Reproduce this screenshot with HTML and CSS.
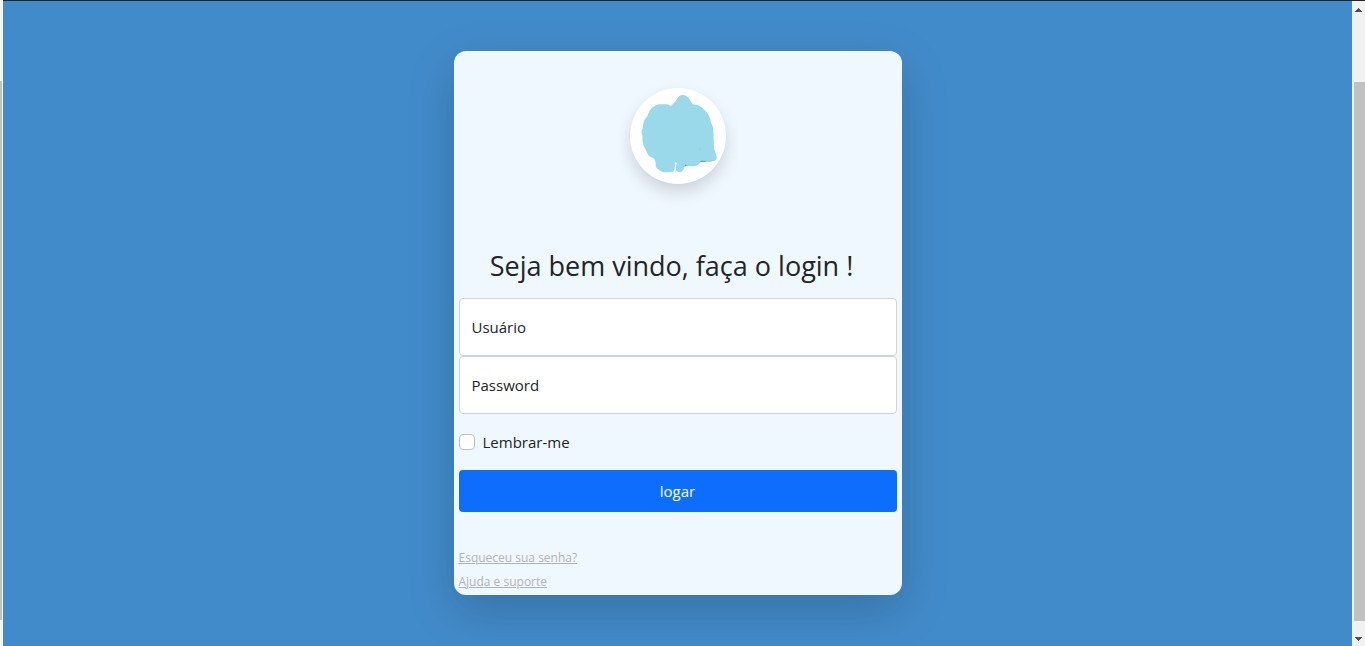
FILE: index.html
```html
<!DOCTYPE html>
<html lang="pt-BR">
<head>
<meta charset="utf-8">
<meta name="viewport" content="width=device-width, initial-scale=1">
<title>Login</title>
<link rel="stylesheet" href="styles.css">
</head>
<body>
<div class="window">
  <div class="edge"><div class="edge-thumb"></div></div>
  <main class="page">
    <form class="card">
      <div class="logo">
        <svg viewBox="60 54 288 288" aria-hidden="true">
          <path fill="#9ad9ea" d="M183 108 L198 92 Q206 74 218 74 Q229 75 236 84 L248 103 Q270 104 281 118 Q299 133 303 158 Q310 168 310 184 L312 236 Q320 254 320 264 Q318 274 306 274 L272 275 Q265 288 250 289 L229 288 Q222 289 221 298 Q216 307 209 307 Q198 305 197 295 L200 280 L196 276 Q194 280 196 284 L192 303 Q188 307 178 307 L160 307 Q150 304 145 298 Q137 295 137 285 Q138 268 128 263 Q116 262 112 249 L101 227 Q97 219 97 196 Q92 184 98 176 Q99 151 112 139 Q119 118 128 112 Q140 103 148 103 L168 103 Q178 104 183 108 Z"/>
          <path fill="none" stroke="#49656e" stroke-width="2" d="M271 274 h16 M225 286 h4"/>
          <path fill="none" stroke="#85bdca" stroke-width="2" d="M287 274 h18 M268 236 l4 3"/>
        </svg>
      </div>
      <h1 class="title">Seja bem vindo, faça o login !</h1>
      <div class="field">
        <input class="input" id="user" type="text" placeholder=" ">
        <label class="label" for="user">Usuário</label>
      </div>
      <div class="field">
        <input class="input" id="password" type="password" placeholder=" ">
        <label class="label" for="password">Password</label>
      </div>
      <div class="remember">
        <input class="check" id="remember" type="checkbox">
        <label for="remember">Lembrar-me</label>
      </div>
      <button class="submit" type="submit">logar</button>
      <nav class="links">
        <a href="#">Esqueceu sua senha?</a>
        <a href="#">Ajuda e suporte</a>
      </nav>
    </form>
  </main>
  <div class="scrollbar">
    <svg class="arrow" viewBox="0 0 7 4" aria-hidden="true"><path fill="#505050" d="M3 0h1v1h1v1h1v1h1v1H0V3h1V2h1V1h1z"/></svg>
    <div class="thumb"></div>
    <svg class="arrow" viewBox="0 0 7 4" aria-hidden="true"><path fill="#505050" d="M0 0h7v1H6v1H5v1H4v1H3V3H2V2H1V1H0z"/></svg>
  </div>
</div>
</body>
</html>
```
FILE: styles.css
```css
* { box-sizing: border-box; }

body {
  margin: 0;
  background: #428bca;
  color: #212529;
  font: 400 15px/24px "Open Sans", "Noto Sans", sans-serif;
}

.window {
  display: flex;
  height: 100vh;
  overflow: hidden;
}

.edge {
  flex: 0 0 3px;
  padding: 81px 1px 26px 0;
  background: #f5f5f5;
}

.edge-thumb {
  height: 100%;
  background: #c1c1c1;
}

.page {
  flex: 1;
  padding: 50px 16px;
  border-top: 1px solid #212529;
  overflow: hidden;
}

.card {
  width: 100%;
  max-width: 448px;
  margin: 0 auto;
  padding: 37px 5px 1px;
  border-radius: 12px;
  background: #f0f8ff;
  box-shadow: 0 16px 48px rgba(0, 0, 0, 0.18);
}

.logo {
  width: 96px;
  height: 96px;
  margin: 0 auto 65px;
  border-radius: 50%;
  background: #fff;
  box-shadow: 0 8px 16px rgba(0, 0, 0, 0.15);
}

.logo svg { display: block; }

.title {
  margin: 0 0 15px;
  padding-right: 12px;
  font-size: 27px;
  line-height: 34px;
  font-weight: 400;
  text-align: center;
}

.field {
  display: grid;
  height: 58px;
}

.input,
.label { grid-area: 1 / 1; }

.input {
  width: 100%;
  padding: 16px 12px;
  border: 1px solid #ced4da;
  border-radius: 4px;
  background: #fff;
  font: inherit;
}

.label {
  align-self: center;
  justify-self: start;
  padding-left: 13px;
  pointer-events: none;
}

.input:focus + .label,
.input:not(:placeholder-shown) + .label { visibility: hidden; }

.remember {
  display: flex;
  align-items: center;
  gap: 8px;
  margin: 16px 0;
}

.check {
  appearance: none;
  width: 16px;
  height: 16px;
  margin: 0;
  border: 1px solid #bfbfbf;
  border-radius: 4px;
  background: #fff;
}

.check:checked { background: #0d6efd; }

.submit {
  display: block;
  width: 100%;
  height: 42px;
  border: 0;
  border-radius: 4px;
  background: #0d6efd;
  color: #fff;
  font: inherit;
}

.links {
  display: flex;
  flex-direction: column;
  align-items: flex-start;
  margin-top: 34px;
}

.links a {
  color: #b0b3b6;
  font-size: 12px;
}

.scrollbar {
  display: flex;
  flex: 0 0 13px;
  flex-direction: column;
  align-items: center;
  padding: 7px 0 5px;
  border-top: 1px solid #212529;
  background: #f1f1f1;
}

.arrow {
  width: 7px;
  height: 4px;
}

.thumb {
  flex: 1;
  align-self: stretch;
  margin: 70px 0 16px 2px;
  background: #c1c1c1;
}
```
